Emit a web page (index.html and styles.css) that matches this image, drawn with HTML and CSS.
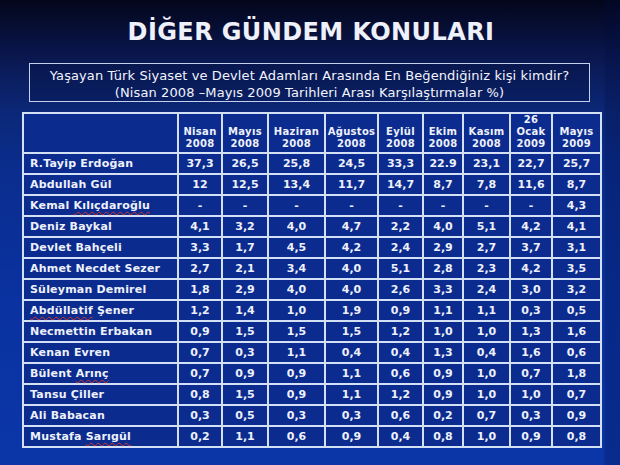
FILE: index.html
```html
<!DOCTYPE html>
<html lang="tr">
<head>
<meta charset="utf-8">
<title>Diğer Gündem Konuları</title>
<link rel="stylesheet" href="styles.css">
</head>
<body>
<div class="slide">
  <h1 class="title">DİĞER GÜNDEM KONULARI</h1>
  <div class="question">
    <p>Yaşayan Türk Siyaset ve Devlet Adamları Arasında En Beğendiğiniz kişi kimdir?</p>
    <p>(Nisan 2008 –Mayıs 2009 Tarihleri Arası Karşılaştırmalar %)</p>
  </div>
  <table class="grid">
    <colgroup>
      <col class="c-name"><col class="c-44"><col class="c-46"><col class="c-57"><col class="c-53"><col class="c-45"><col class="c-40"><col class="c-47"><col class="c-42"><col class="c-49">
    </colgroup>
    <thead>
      <tr>
        <th class="corner"></th>
        <th>Nisan<br>2008</th>
        <th>Mayıs<br>2008</th>
        <th>Haziran<br>2008</th>
        <th>Ağustos<br>2008</th>
        <th>Eylül<br>2008</th>
        <th>Ekim<br>2008</th>
        <th>Kasım<br>2008</th>
        <th>26<br>Ocak<br>2009</th>
        <th>Mayıs<br>2009</th>
      </tr>
    </thead>
    <tbody>
      <tr><td class="name">R.Tayip Erdoğan</td><td>37,3</td><td>26,5</td><td>25,8</td><td>24,5</td><td>33,3</td><td>22.9</td><td>23,1</td><td>22,7</td><td>25,7</td></tr>
      <tr><td class="name">Abdullah Gül</td><td>12</td><td>12,5</td><td>13,4</td><td>11,7</td><td>14,7</td><td>8,7</td><td>7,8</td><td>11,6</td><td>8,7</td></tr>
      <tr><td class="name">Kemal <span class="spell">Kılıçdaroğlu</span></td><td>-</td><td>-</td><td>-</td><td>-</td><td>-</td><td>-</td><td>-</td><td>-</td><td>4,3</td></tr>
      <tr><td class="name">Deniz Baykal</td><td>4,1</td><td>3,2</td><td>4,0</td><td>4,7</td><td>2,2</td><td>4,0</td><td>5,1</td><td>4,2</td><td>4,1</td></tr>
      <tr><td class="name">Devlet Bahçeli</td><td>3,3</td><td>1,7</td><td>4,5</td><td>4,2</td><td>2,4</td><td>2,9</td><td>2,7</td><td>3,7</td><td>3,1</td></tr>
      <tr><td class="name">Ahmet Necdet Sezer</td><td>2,7</td><td>2,1</td><td>3,4</td><td>4,0</td><td>5,1</td><td>2,8</td><td>2,3</td><td>4,2</td><td>3,5</td></tr>
      <tr><td class="name">Süleyman Demirel</td><td>1,8</td><td>2,9</td><td>4,0</td><td>4,0</td><td>2,6</td><td>3,3</td><td>2,4</td><td>3,0</td><td>3,2</td></tr>
      <tr><td class="name"><span class="spell">Abdüllatif</span> Şener</td><td>1,2</td><td>1,4</td><td>1,0</td><td>1,9</td><td>0,9</td><td>1,1</td><td>1,1</td><td>0,3</td><td>0,5</td></tr>
      <tr><td class="name">Necmettin Erbakan</td><td>0,9</td><td>1,5</td><td>1,5</td><td>1,5</td><td>1,2</td><td>1,0</td><td>1,0</td><td>1,3</td><td>1,6</td></tr>
      <tr><td class="name">Kenan Evren</td><td>0,7</td><td>0,3</td><td>1,1</td><td>0,4</td><td>0,4</td><td>1,3</td><td>0,4</td><td>1,6</td><td>0,6</td></tr>
      <tr><td class="name">Bülent <span class="spell">Arınç</span></td><td>0,7</td><td>0,9</td><td>0,9</td><td>1,1</td><td>0,6</td><td>0,9</td><td>1,0</td><td>0,7</td><td>1,8</td></tr>
      <tr><td class="name">Tansu Çiller</td><td>0,8</td><td>1,5</td><td>0,9</td><td>1,1</td><td>1,2</td><td>0,9</td><td>1,0</td><td>1,0</td><td>0,7</td></tr>
      <tr><td class="name">Ali Babacan</td><td>0,3</td><td>0,5</td><td>0,3</td><td>0,3</td><td>0,6</td><td>0,2</td><td>0,7</td><td>0,3</td><td>0,9</td></tr>
      <tr><td class="name">Mustafa <span class="spell">Sarıgül</span></td><td>0,2</td><td>1,1</td><td>0,6</td><td>0,9</td><td>0,4</td><td>0,8</td><td>1,0</td><td>0,9</td><td>0,8</td></tr>
    </tbody>
  </table>
</div>
</body>
</html>
```

FILE: styles.css
```css
html, body {
  margin: 0;
  padding: 0;
}

body {
  width: 620px;
  height: 465px;
  overflow: hidden;
  font-family: "DejaVu Sans", Verdana, sans-serif;
  color: #eef1fb;
}

.slide {
  width: 620px;
  height: 465px;
  box-sizing: border-box;
  padding-top: 18px;
  display: flex;
  flex-direction: column;
  background:
    linear-gradient(90deg, rgba(0,0,0,0) 0, rgba(0,0,0,0) 603px, rgba(0,10,60,0.25) 606px, rgba(0,10,60,0.25) 620px),
    linear-gradient(180deg, #03061a 0px, #081240 40px, #0b1d5e 75px, #0b2776 110px, #0a2d8e 170px, #0a32a0 300px, #0b36a8 465px);
}

.title {
  margin: 0;
  height: 28px;
  font-size: 24px;
  line-height: 28px;
  font-weight: bold;
  text-align: center;
  color: #eef0fa;
  letter-spacing: 0.4px;
  padding-left: 2px;
}

.question {
  margin: 17px 30px 0 29px;
  height: 39px;
  box-sizing: border-box;
  border: 1px solid #c3d0ee;
  background: rgba(3, 14, 60, 0.25);
  padding-top: 3px;
  text-align: center;
  font-size: 13px;
  line-height: 17px;
  letter-spacing: 0.1px;
  color: #f2f4fb;
}

.question p {
  margin: 0;
}

.grid {
  margin: 10px 0 0 22px;
  width: 580px;
  table-layout: fixed;
  border-collapse: collapse;
  font-size: 11px;
  font-weight: bold;
  color: #eef1fb;
}

.c-name { width: 155px; }
.c-44 { width: 44px; }
.c-46 { width: 46px; }
.c-57 { width: 57px; }
.c-53 { width: 53px; }
.c-45 { width: 45px; }
.c-40 { width: 40px; }
.c-47 { width: 47px; }
.c-42 { width: 42px; }
.c-49 { width: 49px; }

.grid th,
.grid td {
  border: 2px solid #d3e0f6;
  background: #0b2b8e;
  padding: 0;
}

.grid th {
  height: 36px;
  vertical-align: bottom;
  text-align: center;
  font-size: 10px;
  line-height: 12px;
  padding-bottom: 2px;
  letter-spacing: 0.3px;
}

.grid td {
  height: 19px;
  text-align: center;
  line-height: 19px;
}

.grid td.name {
  text-align: left;
  padding-left: 6px;
  letter-spacing: 0.2px;
}

.spell {
  text-decoration: underline wavy #d2362e;
  text-decoration-thickness: 1px;
  text-underline-offset: 2px;
}
```
